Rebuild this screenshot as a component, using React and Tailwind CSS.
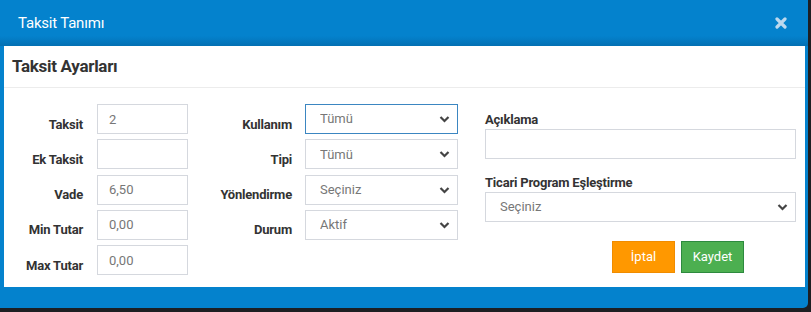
import React from "react";

const font = { fontFamily: "'Liberation Sans Narrow', 'Roboto', sans-serif" };

function Chevron() {
  return (
    <svg
      width="11"
      height="8"
      viewBox="0 0 11 8"
      className="absolute right-[8px] top-1/2 -translate-y-1/2 pointer-events-none"
    >
      <path d="M1.5 2 L5.5 6 L9.5 2" fill="none" stroke="#444" strokeWidth="2.2" />
    </svg>
  );
}

function TextBox({ value, className = "" }) {
  return (
    <input
      readOnly
      value={value}
      className={`h-[30px] border border-[#d5d8de] bg-white px-[11px] text-[13px] text-[#777] outline-none ${className}`}
    />
  );
}

function SelectBox({ value, focused, className = "" }) {
  return (
    <div className={`relative h-[30px] ${className}`}>
      <select
        defaultValue={value}
        className={`w-full h-full appearance-none bg-white pl-[14px] text-[13px] text-[#777] outline-none border ${
          focused ? "border-[#3b86c1]" : "border-[#d5d8de]"
        }`}
      >
        <option>{value}</option>
      </select>
      <Chevron />
    </div>
  );
}

function Row({ label, labelW, children }) {
  return (
    <div className="flex items-end h-[30px]">
      <span
        className="text-right text-[13px] font-bold text-[#333] tracking-[-0.2px]"
        style={{ width: labelW }}
      >
        {label}
      </span>
      {children}
    </div>
  );
}

export default function App() {
  return (
    <div className="w-[811px] h-[312px] bg-[#1d1f22] overflow-hidden" style={font}>
      <div className="w-[808px] h-[308px] bg-[#0482cd] rounded-br-[5px] flex flex-col">
        {/* Header */}
        <div className="h-[46px] flex items-center justify-between pl-[18px] pr-[21px] bg-[linear-gradient(to_bottom,#0482cd_78%,#0370b3)]">
          <span className="text-white text-[15px] tracking-[-0.2px]">Taksit Tanımı</span>
          <svg width="12" height="12" viewBox="0 0 12 12">
            <path d="M2 2 L10 10 M10 2 L2 10" stroke="#bcd8ee" strokeWidth="3.2" strokeLinecap="round" />
          </svg>
        </div>

        {/* Body */}
        <div className="ml-[4px] mr-[3px] h-[241px] bg-white">
          <div className="h-[42px] flex items-center px-[8px] border-b border-[#ececec]">
            <h2 className="text-[17px] font-bold text-[#333] tracking-[-0.3px]">Taksit Ayarları</h2>
          </div>

          <div className="flex pt-[16px]">
            {/* Column 1 */}
            <div className="flex flex-col gap-[5.3px]">
              <Row label="Taksit" labelW={79}>
                <TextBox value="2" className="ml-[14px] w-[91px]" />
              </Row>
              <Row label="Ek Taksit" labelW={79}>
                <TextBox value="" className="ml-[14px] w-[91px]" />
              </Row>
              <Row label="Vade" labelW={79}>
                <TextBox value="6,50" className="ml-[14px] w-[91px]" />
              </Row>
              <Row label="Min Tutar" labelW={79}>
                <TextBox value="0,00" className="ml-[14px] w-[91px]" />
              </Row>
              <Row label="Max Tutar" labelW={79}>
                <TextBox value="0,00" className="ml-[14px] w-[91px]" />
              </Row>
            </div>

            {/* Column 2 */}
            <div className="flex flex-col gap-[5.3px]">
              <Row label="Kullanım" labelW={104}>
                <SelectBox value="Tümü" focused className="ml-[13px] w-[153px]" />
              </Row>
              <Row label="Tipi" labelW={104}>
                <SelectBox value="Tümü" className="ml-[13px] w-[153px]" />
              </Row>
              <Row label="Yönlendirme" labelW={104}>
                <SelectBox value="Seçiniz" className="ml-[13px] w-[153px]" />
              </Row>
              <Row label="Durum" labelW={104}>
                <SelectBox value="Aktif" className="ml-[13px] w-[153px]" />
              </Row>
            </div>

            {/* Column 3 */}
            <div className="ml-[27px] w-[311px] flex flex-col">
              <label className="text-[13px] font-bold text-[#333] leading-[16px] mt-[8px] tracking-[-0.2px]">Açıklama</label>
              <TextBox value="" className="mt-[1px] w-full" />
              <label className="text-[13px] font-bold text-[#333] leading-[16px] mt-[16px] tracking-[-0.2px]">
                Ticari Program Eşleştirme
              </label>
              <SelectBox value="Seçiniz" className="mt-[1px] w-full" />
              <div className="flex justify-end gap-[6px] mt-[19px] pr-[52px]">
                <button className="w-[63px] h-[32px] bg-[#ff9800] border border-[#f08c00] text-white text-[13px]">
                  İptal
                </button>
                <button className="w-[63px] h-[32px] bg-[#4caf50] border border-[#2d8a3e] text-white text-[13px]">
                  Kaydet
                </button>
              </div>
            </div>
          </div>
        </div>
      </div>
    </div>
  );
}
